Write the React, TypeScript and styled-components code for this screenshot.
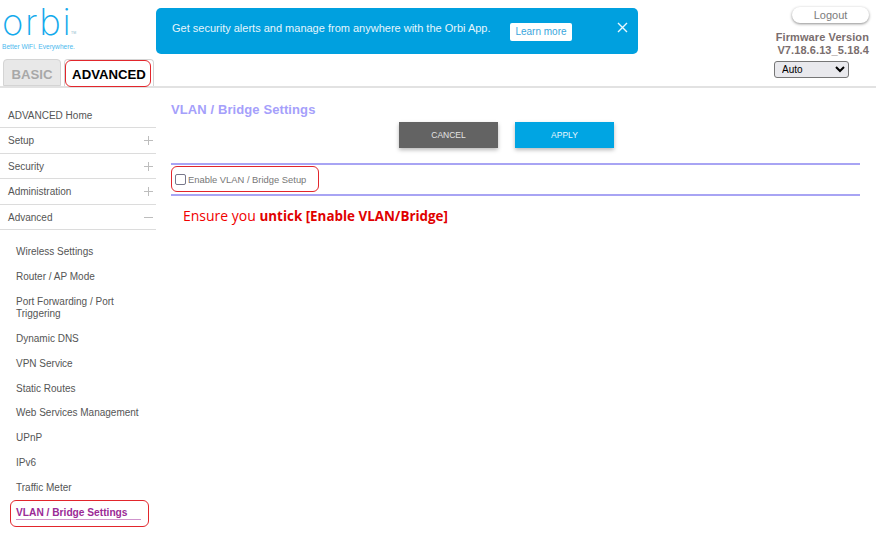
import React from "react";
import styled, { createGlobalStyle } from "styled-components";

const Global = createGlobalStyle`
  html, body { margin: 0; padding: 0; background: #fff; }
  body { font-family: "Liberation Sans", Arial, sans-serif; }
  * { box-sizing: border-box; }
`;

const Page = styled.div`
  position: relative;
  width: 876px;
  height: 533px;
  overflow: hidden;
  background: #fff;
`;

const Header = styled.header`
  height: 88px;
  border-bottom: 2px solid #e2e2e2;
  display: flex;
  align-items: flex-start;
`;

const Brand = styled.div`
  width: 156px;
  height: 86px;
  flex: none;
  display: flex;
  flex-direction: column;
`;

const LogoBlock = styled.div`
  height: 60px;
  padding-left: 2px;
  position: relative;
`;

const LogoWord = styled.div`
  font-family: "Inter", sans-serif;
  font-weight: 200;
  font-size: 36.5px;
  line-height: 44px;
  height: 44px;
  letter-spacing: 1.6px;
  color: #15aaec;
`;

const Trademark = styled.span`
  position: absolute;
  left: 71px;
  top: 31px;
  font-size: 3.5px;
  color: #8fb9cc;
`;

const Tagline = styled.div`
  font-size: 6.6px;
  line-height: 8px;
  color: #4db9ee;
  white-space: nowrap;
  margin-top: -1px;
`;

const Tabs = styled.div`
  display: flex;
  padding-left: 3px;
  gap: 3px;
  height: 27px;
`;

const Tab = styled.div<{ $active?: boolean }>`
  height: 27px;
  width: ${(p) => (p.$active ? "90px" : "58px")};
  border: 1px solid #d4d4d4;
  border-bottom: ${(p) => (p.$active ? "none" : "1px solid #d4d4d4")};
  border-radius: 4px 4px 0 0;
  background: ${(p) => (p.$active ? "#fff" : "#e8e8e8")};
  color: ${(p) => (p.$active ? "#000" : "#a8a8a8")};
  font-size: 13.2px;
  font-weight: 700;
  display: flex;
  align-items: center;
  justify-content: center;
  padding-top: 3px;
  position: relative;
`;

const Banner = styled.div`
  margin-top: 8px;
  width: 482px;
  height: 46px;
  background: #00a0df;
  border-radius: 5px;
  display: flex;
  align-items: center;
  padding-left: 16px;
  color: #e4f5fc;
  font-size: 11px;
`;

const BannerText = styled.span`
  width: 338px;
  flex: none;
  white-space: nowrap;
  margin-top: -6px;
`;

const LearnMore = styled.span`
  width: 62px;
  height: 18px;
  flex: none;
  background: #fff;
  color: #3aa6dc;
  border-radius: 2px;
  font-size: 10px;
  display: flex;
  align-items: center;
  justify-content: center;
  margin-top: 1px;
`;

const CloseIcon = styled.svg`
  width: 11px;
  height: 11px;
  margin-left: 45px;
  margin-top: -8px;
  flex: none;
`;

const Account = styled.div`
  flex: 1;
  display: flex;
  flex-direction: column;
  align-items: flex-end;
  padding: 7px 7px 0 0;
`;

const Logout = styled.div`
  width: 77px;
  height: 16px;
  background: #fff;
  border-radius: 8px;
  box-shadow: 0 1px 3px rgba(0, 0, 0, 0.45);
  color: #7b7b7b;
  font-size: 11px;
  display: flex;
  align-items: center;
  justify-content: center;
`;

const Firmware = styled.div`
  margin-top: 8px;
  font-size: 11px;
  line-height: 13px;
  font-weight: 700;
  color: #7a6e6e;
  text-align: right;
  letter-spacing: 0.1px;
  white-space: nowrap;
`;

const LangSelect = styled.select`
  display: block;
  width: 75px;
  height: 17px;
  margin: 4px 20px 0 0;
  padding: 0 0 0 3px;
  font-family: "Liberation Sans", Arial, sans-serif;
  font-size: 10px;
  color: #000;
  background: #e9e9ed;
  border: 1px solid #767676;
  border-radius: 3px;
`;

const Body = styled.div`
  display: flex;
`;

const Sidebar = styled.nav`
  width: 156px;
  flex: none;
  padding-top: 14.4px;
`;

const MenuRow = styled.div`
  height: 25.6px;
  border-bottom: 1.5px solid #dcdcdc;
  padding: 1px 3px 0 8px;
  display: flex;
  align-items: center;
  justify-content: space-between;
  font-size: 10px;
  color: #555;
`;

const MenuSign = styled.svg`
  width: 9px;
  height: 9px;
`;

const SubMenu = styled.div`
  padding: 9.6px 0 0 16px;
`;

const SubItem = styled.div<{ $current?: boolean }>`
  min-height: 24.9px;
  padding: 6px 12px 6px 0;
  font-size: ${(p) => (p.$current ? "10.2px" : "10px")};
  line-height: 12.5px;
  color: ${(p) => (p.$current ? "#9b2a96" : "#555")};
  font-weight: ${(p) => (p.$current ? 700 : 400)};
`;

const CurrentLabel = styled.span`
  display: block;
  width: 125px;
  padding-bottom: 0;
  border-bottom: 1.5px solid #cf93cc;
  white-space: nowrap;
`;

const Main = styled.main`
  flex: 1;
  padding: 13.5px 16px 0 15px;
`;

const Title = styled.h1`
  margin: 0;
  font-size: 13px;
  line-height: 15px;
  font-weight: 700;
  color: #a5a0fb;
  letter-spacing: 0.1px;
`;

const Actions = styled.div`
  margin-top: 5.5px;
  padding-left: 228px;
  display: flex;
  gap: 17px;
`;

const ActionButton = styled.div<{ $primary?: boolean }>`
  width: 99px;
  height: 26px;
  background: ${(p) => (p.$primary ? "#00a5e3" : "#636363")};
  color: ${(p) => (p.$primary ? "#e8f7fd" : "#e3e3e3")};
  box-shadow: 0 2px 4px rgba(0, 0, 0, 0.28);
  font-size: 8.5px;
  display: flex;
  align-items: center;
  justify-content: center;
`;

const OptionRow = styled.div`
  margin-top: 15px;
  height: 33px;
  border-top: 2px solid #a8a4f4;
  border-bottom: 2px solid #a8a4f4;
  padding-left: 4px;
  display: flex;
  align-items: center;
  color: #777;
  font-size: 9.4px;
`;

const Check = styled.span`
  width: 11px;
  height: 11px;
  border: 1.3px solid #77778a;
  border-radius: 2px;
  margin-right: 2px;
  background: #fff;
`;

const Note = styled.p`
  margin: 11px 0 0 12px;
  font-family: "Open Sans", sans-serif;
  font-size: 14px;
  line-height: 18px;
  color: #f00000;
`;

const NoteStrong = styled.strong`
  font-size: 13.4px;
  font-weight: 700;
  color: #e00000;
`;

const Callout = styled.div<{ $x: number; $y: number; $w: number; $h: number }>`
  position: absolute;
  left: ${(p) => p.$x}px;
  top: ${(p) => p.$y}px;
  width: ${(p) => p.$w}px;
  height: ${(p) => p.$h}px;
  border: 1px solid #e2262c;
  border-radius: 6px;
  pointer-events: none;
`;

const Plus = () => (
  <MenuSign viewBox="0 0 9 9">
    <path d="M4.5 0v9M0 4.5h9" stroke="#bdbdbd" strokeWidth="1" fill="none" />
  </MenuSign>
);

const Minus = () => (
  <MenuSign viewBox="0 0 9 9">
    <path d="M0 4.5h9" stroke="#bdbdbd" strokeWidth="1" fill="none" />
  </MenuSign>
);

const subItems = [
  "Wireless Settings",
  "Router / AP Mode",
  "Port Forwarding / Port Triggering",
  "Dynamic DNS",
  "VPN Service",
  "Static Routes",
  "Web Services Management",
  "UPnP",
  "IPv6",
  "Traffic Meter",
];

export default function App() {
  return (
    <Page>
      <Global />
      <Header>
        <Brand>
          <LogoBlock>
            <LogoWord>orbi</LogoWord>
            <Trademark>TM</Trademark>
            <Tagline>Better WiFi. Everywhere.</Tagline>
          </LogoBlock>
          <Tabs>
            <Tab>BASIC</Tab>
            <Tab $active>ADVANCED</Tab>
          </Tabs>
        </Brand>
        <Banner>
          <BannerText>Get security alerts and manage from anywhere with the Orbi App.</BannerText>
          <LearnMore>Learn more</LearnMore>
          <CloseIcon viewBox="0 0 11 11">
            <path d="M1 1l9 9M10 1l-9 9" stroke="#eaf8fe" strokeWidth="1.4" fill="none" />
          </CloseIcon>
        </Banner>
        <Account>
          <Logout>Logout</Logout>
          <Firmware>
            Firmware Version
            <br />
            V7.18.6.13_5.18.4
          </Firmware>
          <LangSelect defaultValue="Auto">
            <option>Auto</option>
          </LangSelect>
        </Account>
      </Header>
      <Body>
        <Sidebar>
          <MenuRow>ADVANCED Home</MenuRow>
          <MenuRow>
            Setup
            <Plus />
          </MenuRow>
          <MenuRow>
            Security
            <Plus />
          </MenuRow>
          <MenuRow>
            Administration
            <Plus />
          </MenuRow>
          <MenuRow>
            Advanced
            <Minus />
          </MenuRow>
          <SubMenu>
            {subItems.map((s) => (
              <SubItem key={s}>{s}</SubItem>
            ))}
            <SubItem $current>
              <CurrentLabel>VLAN / Bridge Settings</CurrentLabel>
            </SubItem>
          </SubMenu>
        </Sidebar>
        <Main>
          <Title>VLAN / Bridge Settings</Title>
          <Actions>
            <ActionButton>CANCEL</ActionButton>
            <ActionButton $primary>APPLY</ActionButton>
          </Actions>
          <OptionRow>
            <Check />
            Enable VLAN / Bridge Setup
          </OptionRow>
          <Note>
            Ensure you <NoteStrong>untick [Enable VLAN/Bridge]</NoteStrong>
          </Note>
        </Main>
      </Body>
      <Callout $x={65} $y={60} $w={86} $h={27} />
      <Callout $x={171} $y={166} $w={148} $h={26} />
      <Callout $x={10} $y={500} $w={139} $h={27} />
    </Page>
  );
}
